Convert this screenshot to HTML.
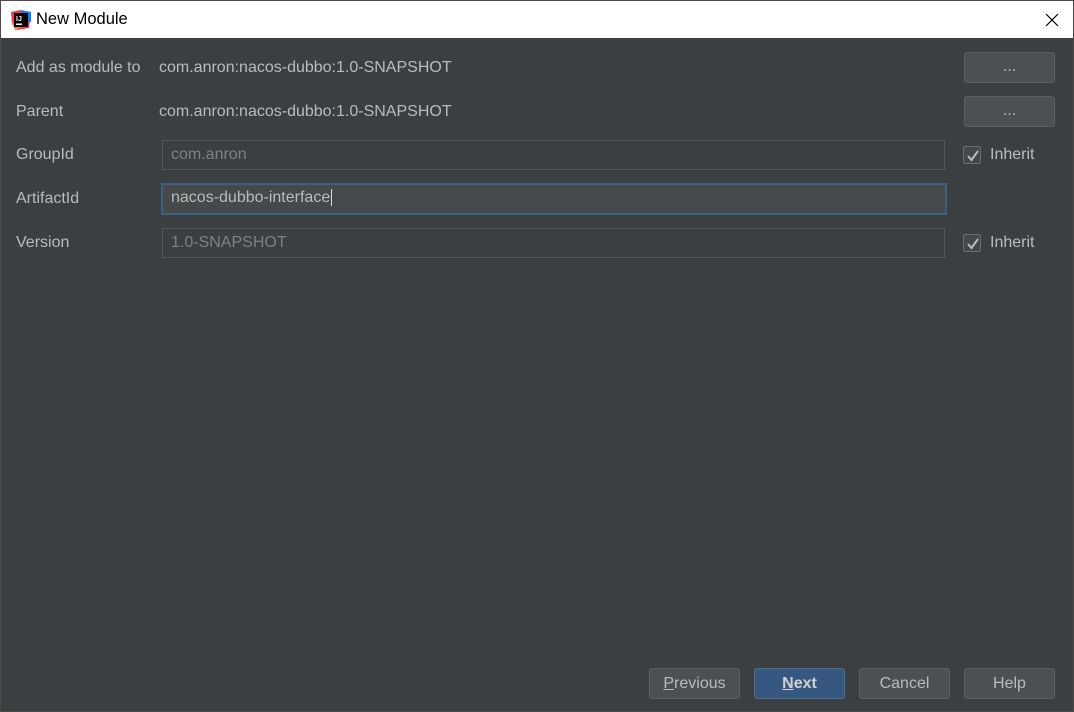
<!DOCTYPE html><html><head><style>
body{margin:0;width:1074px;height:712px;overflow:hidden;font-family:"Liberation Sans",sans-serif;}
.win{position:absolute;left:0;top:0;width:1072px;height:710px;border:1px solid #4a4a4a;background:#3c3f41;}
.title{position:absolute;left:0;top:0;width:1072px;height:37px;background:#fff;}
.t{position:absolute;color:#000;font-size:16.5px;left:35px;top:9px;}
.lab{position:absolute;color:#bbbbbb;font-size:16px;}
.btn{position:absolute;background:#4c5052;border:1px solid #5e6060;border-radius:3px;color:#bbbbbb;font-size:16px;text-align:center;box-sizing:border-box;}
.fld{position:absolute;left:161px;width:783px;height:30px;box-sizing:border-box;border:1px solid #555859;background:#3c3f41;color:#808080;font-size:16px;padding:5px 8px;}
.cb{position:absolute;left:962px;width:18px;height:18px;box-sizing:border-box;border:1px solid #6b6b6b;border-radius:2px;background:#43494a;}
</style></head><body><div class="win">
<div class="title">
<svg style="position:absolute;left:10px;top:9px" width="20" height="20" viewBox="0 0 20 20"><path d="M0 2L9 0 20 4 18 18 6 20 1 14Z" fill="#fe315d"/><path d="M10 0L20 2 20 12 12 10Z" fill="#087cfa"/><path d="M0 10L4 20 10 18Z" fill="#fc801d"/><rect x="3" y="3" width="14" height="14" fill="#000"/><text x="5" y="11" font-size="7" fill="#fff" font-family="Liberation Sans" font-weight="bold">IJ</text><rect x="5" y="13.5" width="6" height="1.5" fill="#fff"/></svg>
<div class="t">New Module</div>
<svg style="position:absolute;left:1044px;top:12px" width="14" height="14"><path d="M1 1L13 13M13 1L1 13" stroke="#000" stroke-width="1.2"/></svg>
</div>
<div class="lab" style="left:15px;top:58px">Add as module to</div>
<div class="lab" style="left:158px;top:58px">com.anron:nacos-dubbo:1.0-SNAPSHOT</div>
<div class="lab" style="left:15px;top:102px">Parent</div>
<div class="lab" style="left:158px;top:102px">com.anron:nacos-dubbo:1.0-SNAPSHOT</div>
<div class="btn" style="left:963px;top:51px;width:91px;height:31px;line-height:27px">...</div>
<div class="btn" style="left:963px;top:95px;width:91px;height:31px;line-height:27px">...</div>
<div class="lab" style="left:15px;top:145px">GroupId</div>
<div class="fld" style="top:139px">com.anron</div>
<div class="cb" style="top:145px"></div><svg style="position:absolute;left:965px;top:148px" width="14" height="13"><path d="M2 7L5.5 11 12 2" stroke="#bbb" stroke-width="2" fill="none"/></svg>
<div class="lab" style="left:989px;top:145px">Inherit</div>
<div class="lab" style="left:15px;top:189px">ArtifactId</div>
<div class="fld" style="top:182px;left:160px;width:786px;height:32px;border:2px solid #3d6185;background:#45494a;color:#bbbbbb;padding:4px 8px">nacos-dubbo-interface<span style="border-left:1px solid #ddd;margin-left:1px"></span></div>
<div class="lab" style="left:15px;top:233px">Version</div>
<div class="fld" style="top:227px">1.0-SNAPSHOT</div>
<div class="cb" style="top:233px"></div><svg style="position:absolute;left:965px;top:236px" width="14" height="13"><path d="M2 7L5.5 11 12 2" stroke="#bbb" stroke-width="2" fill="none"/></svg>
<div class="lab" style="left:989px;top:233px">Inherit</div>
<div class="btn" style="left:648px;top:667px;width:91px;height:31px;line-height:29px"><u>P</u>revious</div>
<div class="btn" style="left:753px;top:667px;width:91px;height:31px;line-height:29px;background:#365880;border-color:#4c708c;color:#d0d0d0;font-weight:bold"><u>N</u>ext</div>
<div class="btn" style="left:858px;top:667px;width:91px;height:31px;line-height:29px">Cancel</div>
<div class="btn" style="left:963px;top:667px;width:91px;height:31px;line-height:29px">Help</div>
</div></body></html>
